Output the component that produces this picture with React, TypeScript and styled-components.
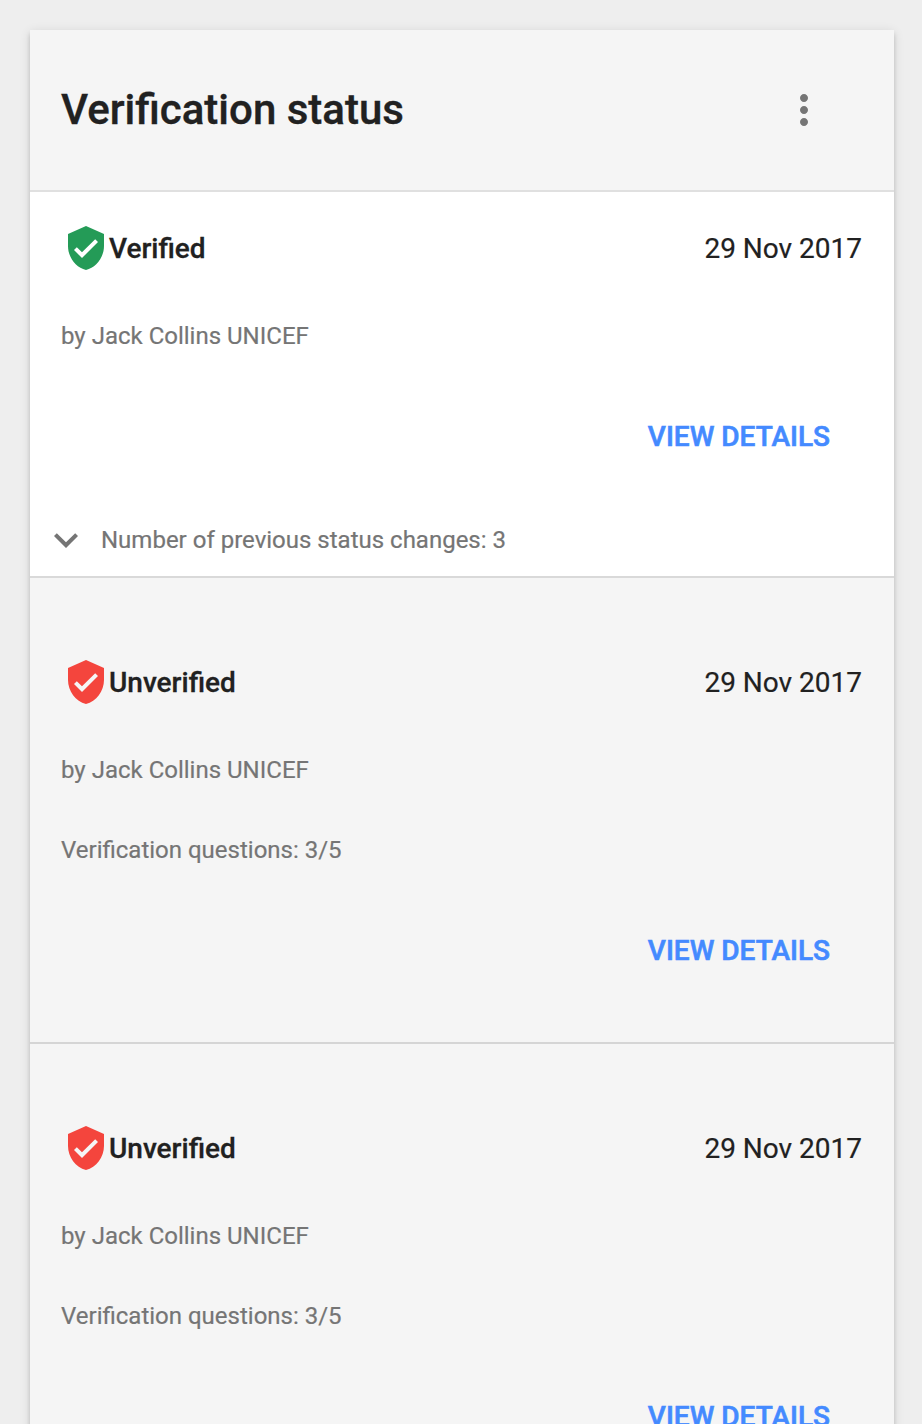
import React from "react";
import styled, { createGlobalStyle } from "styled-components";

const Global = createGlobalStyle`
  body { margin: 0; background: #eeeeee; font-family: Roboto, "Liberation Sans", sans-serif; }
  *, *::before, *::after { box-sizing: border-box; }
`;
const Page = styled.main`
  height: 1424px;
  padding: 30px 28px 0 30px;
  overflow: hidden;
`;
const Card = styled.section`
  background: #f5f5f5;
  box-shadow: 0 4px 4px rgba(0,0,0,.14), 0 2px 10px rgba(0,0,0,.12), 0 6px 2px -4px rgba(0,0,0,.2);
`;
const Header = styled.header`
  display: flex;
  align-items: center;
  justify-content: space-between;
  height: 162px;
  padding: 0 66px 0 31px;
  border-bottom: 2px solid #e0e0e0;
`;
const Title = styled.h1`
  margin: 0;
  font-size: 42px;
  line-height: 48px;
  font-weight: 500;
  color: #212121;
  white-space: nowrap;
  -webkit-text-stroke: 0.35px currentColor;
`;
const MenuButton = styled.button`
  display: flex;
  padding: 0;
  border: 0;
  background: none;
  color: #757575;
`;
const Entry = styled.article<{ $current?: boolean }>`
  display: flex;
  flex-direction: column;
  height: ${p => (p.$current ? 386 : 466)}px;
  padding-top: ${p => (p.$current ? 32 : 80)}px;
  border-bottom: 2px solid ${p => (p.$current ? "#d9d9d9" : "#d5d5d5")};
  background: ${p => (p.$current ? "#ffffff" : "#f5f5f5")};
`;
const StatusRow = styled.div`
  display: flex;
  align-items: center;
  height: 48px;
  padding: 0 32px;
  color: #212121;
  font-size: 28px;
  line-height: 32px;
`;
const Status = styled.strong`
  margin-left: -1px;
  padding-top: 2px;
  font-weight: 500;
  -webkit-text-stroke: 0.3px currentColor;
`;
const ShieldSvg = styled.svg`
  flex: none;
`;
const DateText = styled.time`
  margin-left: auto;
  padding-top: 2px;
  -webkit-text-stroke: 0.2px currentColor;
`;
const Detail = styled.p`
  margin: 48px 31px 0;
  color: #757575;
  font-size: 24px;
  line-height: 32px;
  -webkit-text-stroke: 0.2px currentColor;
`;
const Action = styled.button`
  align-self: flex-end;
  margin: 69px 64px 0 0;
  padding: 0;
  border: 0;
  background: none;
  color: #448aff;
  font: 500 28px/32px Roboto, sans-serif;
  -webkit-text-stroke: 0.6px currentColor;
`;
const History = styled.div`
  display: flex;
  align-items: center;
  gap: 11px;
  height: 48px;
  margin-top: 63px;
  padding-left: 12px;
  color: #757575;
  font-size: 24px;
  line-height: 32px;
  -webkit-text-stroke: 0.2px currentColor;
`;

const Shield = ({ color }: { color: string }) => (
  <ShieldSvg width="48" height="48" viewBox="0 0 24 24" fill={color}>
    <path d="M12 1L3 5v6c0 5.55 3.84 10.74 9 12 5.16-1.26 9-6.45 9-12V5l-9-4zm-2 16l-4-4 1.41-1.41L10 14.17l6.59-6.59L18 9l-8 8z" />
  </ShieldSvg>
);

const Summary = ({ status, color }: { status: string; color: string }) => (
  <>
    <StatusRow>
      <Shield color={color} />
      <Status>{status}</Status>
      <DateText>29 Nov 2017</DateText>
    </StatusRow>
    <Detail>by Jack Collins UNICEF</Detail>
  </>
);

const Unverified = () => (
  <Entry>
    <Summary status="Unverified" color="#f4453d" />
    <Detail>Verification questions: 3/5</Detail>
    <Action>VIEW DETAILS</Action>
  </Entry>
);

export default function App() {
  return (
    <>
      <Global />
      <Page>
        <Card>
          <Header>
            <Title>Verification status</Title>
            <MenuButton aria-label="More options">
              <svg width="48" height="48" viewBox="0 0 24 24" fill="currentColor">
                <path d="M12 8c1.1 0 2-.9 2-2s-.9-2-2-2-2 .9-2 2 .9 2 2 2zm0 2c-1.1 0-2 .9-2 2s.9 2 2 2 2-.9 2-2-.9-2-2-2zm0 6c-1.1 0-2 .9-2 2s.9 2 2 2 2-.9 2-2-.9-2-2-2z" />
              </svg>
            </MenuButton>
          </Header>
          <Entry $current>
            <Summary status="Verified" color="#249b57" />
            <Action>VIEW DETAILS</Action>
            <History>
              <svg width="48" height="48" viewBox="0 0 24 24" fill="currentColor">
                <path d="M16.59 8.59L12 13.17 7.41 8.59 6 10l6 6 6-6z" />
              </svg>
              <span>Number of previous status changes: 3</span>
            </History>
          </Entry>
          <Unverified />
          <Unverified />
        </Card>
      </Page>
    </>
  );
}
